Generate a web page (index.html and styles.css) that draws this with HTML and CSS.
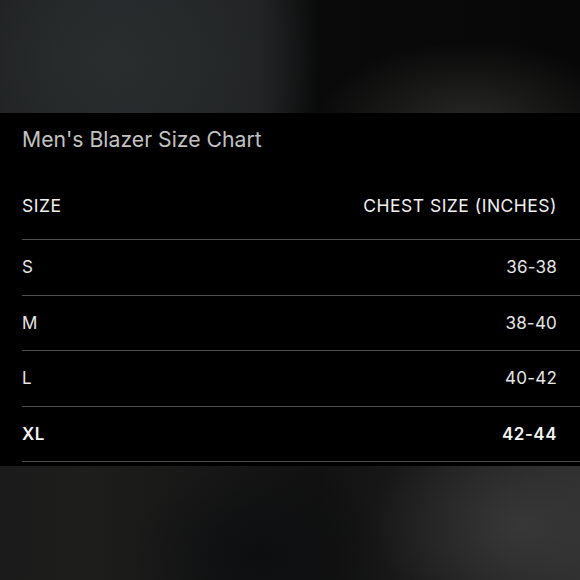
FILE: index.html
```html
<!DOCTYPE html>
<html>
<head>
<meta charset="utf-8">
<link rel="stylesheet" href="styles.css">
</head>
<body>
<div class="bg-top"></div>
<section class="panel">
  <h1 class="title">Men's Blazer Size Chart</h1>
  <div class="table">
    <div class="row head"><span>SIZE</span><span>CHEST SIZE (INCHES)</span></div>
    <div class="row"><span>S</span><span>36-38</span></div>
    <div class="row"><span>M</span><span>38-40</span></div>
    <div class="row"><span>L</span><span>40-42</span></div>
    <div class="row strong"><span>XL</span><span>42-44</span></div>
  </div>
</section>
<div class="bg-bottom"></div>
</body>
</html>
```
FILE: styles.css
```css
html, body {
  margin: 0;
  padding: 0;
  width: 580px;
  height: 580px;
  overflow: hidden;
  background: #000;
  font-family: Inter, Roboto, "Liberation Sans", sans-serif;
}
.bg-top {
  height: 113px;
  background:
    radial-gradient(ellipse 220px 120px at 470px 125px, rgba(55,55,53,0.7), rgba(0,0,0,0) 70%),
    radial-gradient(ellipse 260px 200px at 110px 60px, #2a2d2e, rgba(30,32,33,0) 80%),
    linear-gradient(90deg, #1c1e1f 0%, #24272a 20%, #1f2122 45%, #0a0a0a 55%, #070707 100%);
}
.panel {
  height: 353px;
  box-sizing: border-box;
  background: #000;
  padding: 12px 0 0 22px;
  display: flex;
  flex-direction: column;
}
.title {
  margin: 0;
  font-size: 21.2px;
  line-height: 28px;
  font-weight: 400;
  color: #c2c2c2;
}
.table {
  display: flex;
  flex-direction: column;
}
.row {
  height: 55.5px;
  box-sizing: border-box;
  border-bottom: 1.5px solid #4e4e4e;
  display: flex;
  align-items: center;
  justify-content: space-between;
  padding-right: 23px;
  font-size: 17px;
  letter-spacing: 0.2px;
  color: #e6e6e6;
}
.row.head {
  height: 87px;
  align-items: flex-end;
  padding-bottom: 23px;
  font-size: 17.5px;
  letter-spacing: 0.5px;
  color: #f2f2f2;
}
.row.strong {
  font-weight: 600;
  letter-spacing: 0.5px;
  color: #f4f4f4;
}
.bg-bottom {
  height: 114px;
  background:
    radial-gradient(ellipse 200px 140px at 520px 60px, rgba(60,60,60,0.8), rgba(0,0,0,0) 75%),
    radial-gradient(ellipse 160px 120px at 260px 90px, #0d0e10, rgba(13,14,16,0) 80%),
    linear-gradient(90deg, #1b1b1b 0%, #1d1d1c 15%, #161616 40%, #111 55%, #1e1e1e 80%, #2c2c2c 100%);
}
```
